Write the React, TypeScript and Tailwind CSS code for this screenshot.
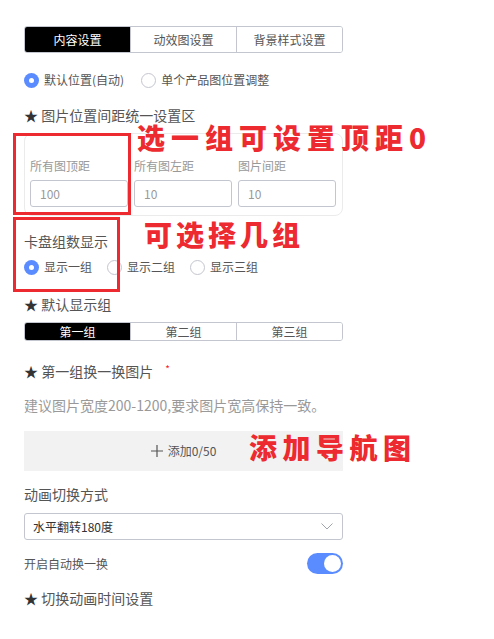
import React, { useState } from "react";

const FONT = { fontFamily: '"Noto Sans CJK SC", "Noto Sans", sans-serif' };

// --- Radio ---
function Radio({ checked, label, onClick }: { checked: boolean; label: string; onClick?: () => void }) {
  return (
    <div onClick={onClick} className="flex items-center gap-[5px] cursor-pointer">
      {checked ? (
        <span className="w-[15px] h-[15px] rounded-full bg-[#5b8cff] flex items-center justify-center">
          <span className="w-[5px] h-[5px] rounded-full bg-white" />
        </span>
      ) : (
        <span className="w-[15px] h-[15px] rounded-full border border-[#c4c6cf] bg-white" />
      )}
      <span className="text-[12px] leading-[16px] text-[#555]">{label}</span>
    </div>
  );
}

// --- Segmented tabs ---
function Segments({ items, active, onChange, height }: { items: string[]; active: number; onChange: (i: number) => void; height: string }) {
  return (
    <div className={`flex border border-[#c4c6cf] rounded-[3px] overflow-hidden ${height}`}>
      {items.map((it, i) => (
        <button
          key={it}
          onClick={() => onChange(i)}
          className={`flex-1 flex items-center justify-center text-[12px] ${i > 0 ? "border-l border-[#c4c6cf]" : ""} ${
            active === i ? "bg-black text-white" : "bg-white text-[#555]"
          }`}
        >
          {it}
        </button>
      ))}
    </div>
  );
}

function StarLabel({ children }: { children: React.ReactNode }) {
  return (
    <div className="text-[14px] leading-[20px] text-[#555]">
      <span className="text-[#333]">★</span> {children}
    </div>
  );
}

export default function App() {
  const [tab, setTab] = useState(0);
  const [pos, setPos] = useState(0);
  const [groups, setGroups] = useState(0);
  const [defGroup, setDefGroup] = useState(0);
  const [auto, setAuto] = useState(true);

  return (
    <div className="relative w-[494px] h-[639px] bg-white overflow-hidden" style={FONT}>
      <div className="w-[319px] ml-[24px] flex flex-col">
        {/* 顶部标签 */}
        <div className="mt-[26px]">
          <Segments items={["内容设置", "动效图设置", "背景样式设置"]} active={tab} onChange={setTab} height="h-[27px]" />
        </div>

        <div className="mt-[19px] flex items-center gap-[17px]">
          <Radio checked={pos === 0} label="默认位置(自动)" onClick={() => setPos(0)} />
          <Radio checked={pos === 1} label="单个产品图位置调整" onClick={() => setPos(1)} />
        </div>

        <div className="mt-[19px] text-[14px] leading-[16px] text-[#555]">
          <span className="text-[#333]">★</span> 图片位置间距统一设置区
        </div>

        {/* 间距设置卡片 */}
        <div className="mt-[10px] h-[83px] border border-[#ebebeb] rounded-[8px] px-[5px] pt-[24px]">
          <div className="flex gap-[6px]">
            {[
              ["所有图顶距", "100"],
              ["所有图左距", "10"],
              ["图片间距", "10"],
            ].map(([l, v]) => (
              <div key={l} className="w-[98px]">
                <div className="text-[12px] leading-[16px] text-[#999]">{l}</div>
                <div className="mt-[6px] h-[27px] border border-[#c4c6cf] rounded-[3px] px-[9px] flex items-center text-[12px] text-[#999]">
                  {v}
                </div>
              </div>
            ))}
          </div>
        </div>

        <div className="mt-[15px] text-[14px] leading-[20px] text-[#555]">卡盘组数显示</div>

        <div className="mt-[8px] flex items-center gap-[15px]">
          <Radio checked={groups === 0} label="显示一组" onClick={() => setGroups(0)} />
          <Radio checked={groups === 1} label="显示二组" onClick={() => setGroups(1)} />
          <Radio checked={groups === 2} label="显示三组" onClick={() => setGroups(2)} />
        </div>

        <div className="mt-[19px]">
          <StarLabel>默认显示组</StarLabel>
        </div>

        <div className="mt-[8px]">
          <Segments items={["第一组", "第二组", "第三组"]} active={defGroup} onChange={setDefGroup} height="h-[19px]" />
        </div>

        <div className="mt-[20px] flex items-center">
          <StarLabel>第一组换一换图片</StarLabel>
          <span className="ml-[12px] text-[10px] leading-[10px] text-[#f5222d] -mt-[4px]">*</span>
        </div>

        <div className="mt-[14px] text-[14px] leading-[20px] text-[#999]">建议图片宽度200-1200,要求图片宽高保持一致。</div>

        <button className="mt-[16px] h-[40px] bg-[#f2f2f2] flex items-center justify-center gap-[5px] text-[12px] text-[#555]">
          <svg width="12" height="12" viewBox="0 0 12 12" fill="none">
            <path d="M6 0 V12 M0 6 H12" stroke="#555" strokeWidth="1.2" />
          </svg>
          <span>添加0/50</span>
        </button>

        <div className="mt-[13px] text-[14px] leading-[20px] text-[#555]">动画切换方式</div>

        <div className="mt-[9px] h-[27px] border border-[#c4c6cf] rounded-[3px] pl-[8px] pr-[9px] flex items-center justify-between">
          <span className="text-[12px] text-[#333]">水平翻转180度</span>
          <svg width="12" height="7" viewBox="0 0 12 7" fill="none">
            <path d="M0.5 0.5 L6 6 L11.5 0.5" stroke="#a0a4ad" strokeWidth="1" />
          </svg>
        </div>

        <div className="mt-[13px] h-[21px] flex items-center justify-between">
          <span className="text-[12px] text-[#555]">开启自动换一换</span>
          <button
            onClick={() => setAuto(!auto)}
            className={`w-[36px] h-[21px] rounded-full p-[2px] flex items-center ${auto ? "bg-[#5b8cff] justify-end" : "bg-[#c4c6cf] justify-start"}`}
          >
            <span className="w-[17px] h-[17px] rounded-full bg-white" />
          </button>
        </div>

        <div className="mt-[14px]">
          <StarLabel>切换动画时间设置</StarLabel>
        </div>
      </div>

      {/* 标注 */}
      <div className="absolute left-[13px] top-[133px] w-[118px] h-[82px] border-[3px] border-[#ec2a2f]" />
      <div className="absolute left-[13px] top-[217px] w-[107px] h-[75px] border-[3px] border-[#ec2a2f]" />
      <div className="absolute left-[137px] top-[123px] text-[28px] leading-[28px] font-black tracking-[6px] text-[#ec2a2f]">选一组可设置顶距0</div>
      <div className="absolute left-[144px] top-[220px] text-[28px] leading-[28px] font-black tracking-[4px] text-[#ec2a2f]">可选择几组</div>
      <div className="absolute left-[249px] top-[433px] text-[28px] leading-[28px] font-black tracking-[5.5px] text-[#ec2a2f]">添加导航图</div>
    </div>
  );
}
